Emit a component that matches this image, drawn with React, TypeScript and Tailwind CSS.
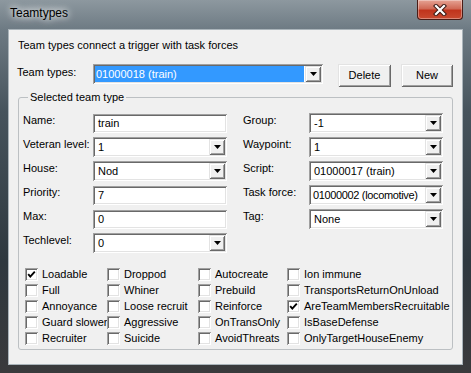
import React from "react";

const sunken =
  "bg-white shadow-[inset_1px_1px_0_#a0a0a0,inset_-1px_-1px_0_#ffffff,inset_2px_2px_0_#696969,inset_-2px_-2px_0_#e3e3e3]";
const raised =
  "bg-[#f0f0f0] shadow-[inset_1px_1px_0_#e3e3e3,inset_-1px_-1px_0_#696969,inset_2px_2px_0_#ffffff,inset_-2px_-2px_0_#a0a0a0]";

function DropButton() {
  return (
    <div className={`w-[16px] shrink-0 self-stretch my-[2px] mr-[2px] flex items-center justify-center ${raised}`}>
      <svg width="7" height="4" viewBox="0 0 7 4">
        <path d="M0 0 H7 L3.5 4 Z" fill="#000" />
      </svg>
    </div>
  );
}

function Combo(props: { value: string; className?: string; selected?: boolean; tight?: boolean }) {
  const { value, className = "", selected, tight } = props;
  return (
    <div className={`h-[20px] flex ${sunken} ${className}`}>
      <div className="flex-1 flex items-center pl-[2px] pr-[1px] py-[2px] min-w-0">
        {selected ? (
          <div className="h-full w-full bg-[#3399ff] text-white flex items-center pl-[1px] whitespace-nowrap">
            {value}
          </div>
        ) : (
          <div className={`whitespace-nowrap ${tight ? "pl-[2px] tracking-[-0.35px]" : "pl-[3px]"}`}>{value}</div>
        )}
      </div>
      <DropButton />
    </div>
  );
}

function Edit(props: { value: string }) {
  return (
    <div className={`h-[19px] mt-[1px] flex items-center pl-[5px] ${sunken}`}>
      {props.value}
    </div>
  );
}

function Check(props: { label: string; checked?: boolean }) {
  return (
    <div className="h-[16px] flex items-center gap-[4px] whitespace-nowrap">
      <div className={`w-[13px] h-[13px] shrink-0 flex items-center justify-center ${sunken}`}>
        {props.checked && (
          <svg width="13" height="13" viewBox="0 0 13 13">
            <path d="M3.2 6.2 L5.3 8.6 L9.8 3.6" stroke="#000" strokeWidth="1.9" fill="none" />
          </svg>
        )}
      </div>
      <span>{props.label}</span>
    </div>
  );
}

function Label(props: { text: string }) {
  return <div className="h-[20px] pt-[1px] whitespace-nowrap">{props.text}</div>;
}

export default function App() {
  const checks: [string, boolean][] = [
    ["Loadable", true], ["Droppod", false], ["Autocreate", false], ["Ion immune", false],
    ["Full", false], ["Whiner", false], ["Prebuild", false], ["TransportsReturnOnUnload", false],
    ["Annoyance", false], ["Loose recruit", false], ["Reinforce", false], ["AreTeamMembersRecruitable", true],
    ["Guard slower", false], ["Aggressive", false], ["OnTransOnly", false], ["IsBaseDefense", false],
    ["Recruiter", false], ["Suicide", false], ["AvoidThreats", false], ["OnlyTargetHouseEnemy", false],
  ];

  const TitleBar =
    <div className="h-[29px] flex items-start justify-between pl-[10px] pr-[8px]">
      <div className="mt-[7px] text-[12px] text-black [text-shadow:0_0_6px_#ffffff,0_0_10px_#ffffff]">
        {`Teamtypes`}
      </div>
      <div className="w-[46px] h-[20px] rounded-b-[4px] border border-t-0 border-[#4a1c16] bg-[linear-gradient(180deg,#e6a394_0%,#d06a56_45%,#c0341d_55%,#c84a30_100%)] flex items-center justify-center shadow-[inset_0_0_0_1px_rgba(255,255,255,0.35)]">
        <svg width="14" height="12" viewBox="0 0 14 12">
          <path d="M3 2 L11 10 M11 2 L3 10" stroke="#3b1a14" strokeWidth="4.2" strokeLinecap="square" />
          <path d="M3 2 L11 10 M11 2 L3 10" stroke="#ffffff" strokeWidth="2.2" strokeLinecap="square" />
        </svg>
      </div>
    </div>

  const Header =
    <>
      <div className="pl-[9px] pt-[9px] h-[22px]">
        {`Team types connect a trigger with task forces`}
      </div>
      <div className="flex items-start mt-[12px] pl-[8px]">
        <div className="w-[76px] pt-[2px]">{`Team types:`}</div>
        <Combo value="01000018 (train)" selected className="w-[230px]" />
        <button className={`ml-[15px] w-[53px] h-[23px] ${raised}`}>{`Delete`}</button>
        <button className={`ml-[10px] w-[52px] h-[23px] ${raised}`}>{`New`}</button>
      </div>
    </>

  const GroupBox =
    <fieldset className="ml-[9px] mt-[4px] w-[435px] h-[259px] border border-[#bcc0c3] rounded-[3px] pl-[4px]">
      <legend className="ml-[5px] px-[2px] h-[13px] leading-[13px]">{`Selected team type`}</legend>
      <div className="flex mt-[9px] gap-[16px]">
        <div className="grid grid-cols-[70px_134px] auto-rows-[20px] gap-y-[4px]">
          <Label text="Name:" /><Edit value="train" />
          <Label text="Veteran level:" /><Combo value="1" />
          <Label text="House:" /><Combo value="Nod" />
          <Label text="Priority:" /><Edit value="7" />
          <Label text="Max:" /><Edit value="0" />
          <Label text="Techlevel:" /><Combo value="0" />
        </div>
        <div className="grid grid-cols-[66px_134px] auto-rows-[20px] gap-y-[4px]">
          <Label text="Group:" /><Combo value="-1" />
          <Label text="Waypoint:" /><Combo value="1" />
          <Label text="Script:" /><Combo value="01000017 (train)" />
          <Label text="Task force:" /><Combo value="01000002 (locomotive)" tight />
          <Label text="Tag:" /><Combo value="None" />
        </div>
      </div>
      <div className="grid grid-cols-[82px_91px_89px_1fr] mt-[13px] pl-[2px]">
        {checks.map(([label, checked]) =>
          <Check key={label} label={label} checked={checked} />)}
      </div>
    </fieldset>

  return <div className="w-[471px] h-[373px] flex flex-col overflow-hidden bg-[linear-gradient(180deg,#8d989f_0%,#6d7a83_8%,#46535c_30%,#2e383f_70%,#3a3a3c_100%)] font-['Liberation_Sans',Arial,sans-serif] text-[11px] leading-[13px] text-black">
    {TitleBar}
    <div className="mx-[8px] h-[336px] bg-[#f0f0f0] border border-[#aab4ba] flex flex-col">
      {Header}
      {GroupBox}
    </div>
  </div>
}
